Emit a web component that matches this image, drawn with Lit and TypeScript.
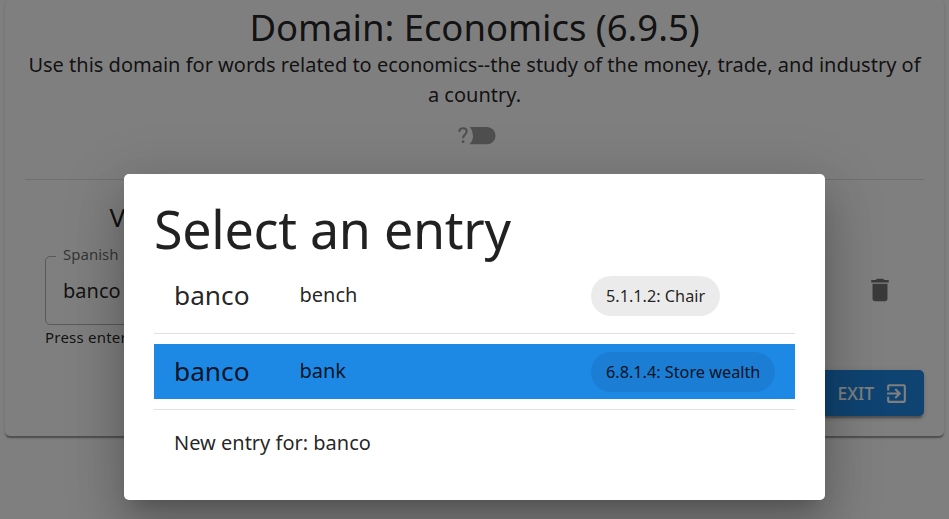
import { LitElement, html, css } from "lit";
import { customElement } from "lit/decorators.js";
import { classMap } from "lit/directives/class-map.js";

interface Entry {
  word: string;
  gloss: string;
  domain: string;
  selected: boolean;
}

const ENTRIES: Entry[] = [
  { word: "banco", gloss: "bench", domain: "5.1.1.2: Chair", selected: false },
  { word: "banco", gloss: "bank", domain: "6.8.1.4: Store wealth", selected: true },
];

@customElement("domain-card")
class DomainCard extends LitElement {
  static styles = css`
    :host {
      display: block;
      box-sizing: border-box;
      height: 436px;
      margin: 0 5px;
      padding: 5px 20px 0;
      border-radius: 5px;
      background: #fff;
      box-shadow: 0 2.5px 1.25px -1.25px rgba(0, 0, 0, 0.2),
        0 1.25px 1.25px rgba(0, 0, 0, 0.14), 0 1.25px 3.75px rgba(0, 0, 0, 0.12);
    }
    .title {
      margin: 0;
      font-size: 36.5px;
      font-weight: 400;
      line-height: 45px;
      letter-spacing: -0.04px;
      text-align: center;
    }
    .description {
      margin: 0;
      font-size: 20px;
      line-height: 30px;
      text-align: center;
    }
    .help {
      display: flex;
      justify-content: center;
      height: 70px;
      box-sizing: border-box;
      padding-top: 16px;
      border-bottom: 1px solid rgba(0, 0, 0, 0.12);
      color: #9e9e9e;
    }
    .toggle {
      display: block;
      width: 40px;
      height: 20px;
      margin-left: 4px;
    }
    .row {
      display: grid;
      grid-template-columns: 262px 1fr 30px;
      column-gap: 20px;
      padding: 20px 29px 0 20px;
      height: 190px;
      box-sizing: border-box;
    }
    .heading {
      margin: 0 0 11px;
      font-size: 26.25px;
      font-weight: 400;
      line-height: 35px;
      text-align: center;
    }
    .field {
      box-sizing: border-box;
      height: 80px;
      margin: 0;
      padding: 0 13px 0 17px;
      min-width: 0;
      border: 1px solid rgba(0, 0, 0, 0.3);
      border-radius: 5px;
      margin-top: -1px;
    }
    .legend {
      padding: 0 7px;
      margin-left: -7px;
      height: 22px;
      font-size: 15px;
      line-height: 18px;
      color: rgba(0, 0, 0, 0.6);
    }
    .value {
      padding-top: 9px;
      font-size: 20px;
      line-height: 30px;
    }
    .hint {
      margin-top: 0;
      font-size: 15px;
      line-height: 25px;
      letter-spacing: 0.015em;
    }
    .trash {
      width: 30px;
      height: 30px;
      margin-top: 75px;
      color: rgba(0, 0, 0, 0.54);
    }
    .actions {
      display: flex;
      justify-content: flex-end;
    }
    .exit {
      display: flex;
      align-items: center;
      gap: 10px;
      box-sizing: border-box;
      height: 46px;
      padding: 0 15px 0 20px;
      border: 0;
      border-radius: 5px;
      background: #1e88e5;
      color: #fff;
      font: 500 17.5px/30px "Noto Sans", sans-serif;
      box-shadow: 0 3.75px 1.25px -2.5px rgba(0, 0, 0, 0.2),
        0 2.5px 2.5px rgba(0, 0, 0, 0.14), 0 1.25px 6.25px rgba(0, 0, 0, 0.12);
    }
    .exit-icon {
      width: 25px;
      height: 25px;
    }
  `;

  render() {
    return html`
      <h1 class="title">Domain: Economics (6.9.5)</h1>
      <p class="description">
        Use this domain for words related to economics--the study of the money, trade, and
        industry of a country.
      </p>
      <div class="help">
        <svg class="toggle" viewBox="0 0 40 20" fill="none">
          <path
            d="M2.3 5.900C2.300 3.400 3.900 2.200 5.900 2.200c2.300 0 3.800 1.300 3.800 3.400 0 2.900-3.600 3.200-3.600 6.600"
            stroke="currentColor"
            stroke-width="2.1"
          />
          <rect x="4.9" y="14.4" width="2.4" height="2.5" fill="currentColor" />
          <path
            d="M12.900 1.100h17.100a8.600 8.600 0 0 1 0 17.200h-17.700q3.700-3.400 3.700-8.400t-3.100-8.800z"
            fill="currentColor"
          />
        </svg>
      </div>
      <div class="row">
        <div>
          <h2 class="heading">Vernacular</h2>
          <fieldset class="field">
            <legend class="legend">Spanish</legend>
            <div class="value">banco</div>
          </fieldset>
          <div class="hint">Press enter to save</div>
        </div>
        <div></div>
        <svg class="trash" viewBox="0 0 24 24" fill="currentColor">
          <path
            d="M6 19c0 1.100.9 2 2 2h8c1.100 0 2-.9 2-2V7H6v12zM19 4h-3.500l-1-1h-5l-1 1H5v2h14V4z"
          />
        </svg>
      </div>
      <div class="actions">
        <button class="exit">
          EXIT
          <svg class="exit-icon" viewBox="0 0 24 24" fill="currentColor">
            <path
              d="M10.090 15.590 11.500 17l5-5-5-5-1.410 1.410L12.670 11H3v2h9.670l-2.580 2.590zM19 3H5c-1.110 0-2 .9-2 2v4h2V5h14v14H5v-4H3v4c0 1.100.89 2 2 2h14c1.100 0 2-.9 2-2V5c0-1.100-.9-2-2-2z"
            />
          </svg>
        </button>
      </div>
    `;
  }
}

@customElement("entry-dialog")
class EntryDialog extends LitElement {
  static styles = css`
    :host {
      display: block;
      box-sizing: border-box;
      width: 701px;
      height: 326px;
      padding: 23px 30px 0;
      border-radius: 5px;
      background: #fff;
      box-shadow: 0 13.75px 18.75px -8.75px rgba(0, 0, 0, 0.2),
        0 30px 47.5px 3.75px rgba(0, 0, 0, 0.14), 0 11.25px 57.5px 10px rgba(0, 0, 0, 0.12);
    }
    .title {
      margin: 0;
      font-size: 52px;
      font-weight: 400;
      line-height: 64px;
      letter-spacing: -0.28px;
      height: 71px;
    }
    .entry {
      display: grid;
      grid-template-columns: 125.500px 291.500px 1fr;
      align-items: center;
      justify-items: start;
      height: 55px;
      padding: 0 20px;
    }
    .selected {
      background: #1e88e5;
    }
    .word {
      font-size: 26.25px;
      line-height: 34px;
      margin-top: -2px;
    }
    .gloss {
      font-size: 20px;
      line-height: 30px;
      letter-spacing: -0.02px;
      margin-top: -2px;
    }
    .chip {
      height: 40px;
      padding: 0 15px;
      border-radius: 20px;
      background: rgba(0, 0, 0, 0.08);
      font-size: 16.25px;
      line-height: 40px;
      white-space: nowrap;
    }
    .divider {
      height: 1px;
      margin: 10px 0;
      background: rgba(0, 0, 0, 0.12);
    }
    .new {
      padding: 8px 20px;
      font-size: 20px;
      line-height: 30px;
    }
  `;

  render() {
    return html`
      <h2 class="title">Select an entry</h2>
      ${ENTRIES.map(
        (e) => html`
          <div class=${classMap({ entry: true, selected: e.selected })}>
            <span class="word">${e.word}</span>
            <span class="gloss">${e.gloss}</span>
            <span class="chip">${e.domain}</span>
          </div>
          <div class="divider"></div>
        `
      )}
      <div class="new">New entry for: banco</div>
    `;
  }
}

@customElement("app-root")
class AppRoot extends LitElement {
  static styles = css`
    :host {
      display: block;
      position: relative;
      width: 949px;
      height: 519px;
      overflow: hidden;
      background: #fff;
      color: rgba(0, 0, 0, 0.87);
      font-family: "Noto Sans", "Open Sans", sans-serif;
    }
    .backdrop {
      position: absolute;
      inset: 0;
      display: flex;
      align-items: flex-start;
      justify-content: center;
      box-sizing: border-box;
      padding-top: 174px;
      background: rgba(0, 0, 0, 0.5);
    }
  `;

  render() {
    return html`
      <domain-card></domain-card>
      <div class="backdrop"><entry-dialog></entry-dialog></div>
    `;
  }
}
